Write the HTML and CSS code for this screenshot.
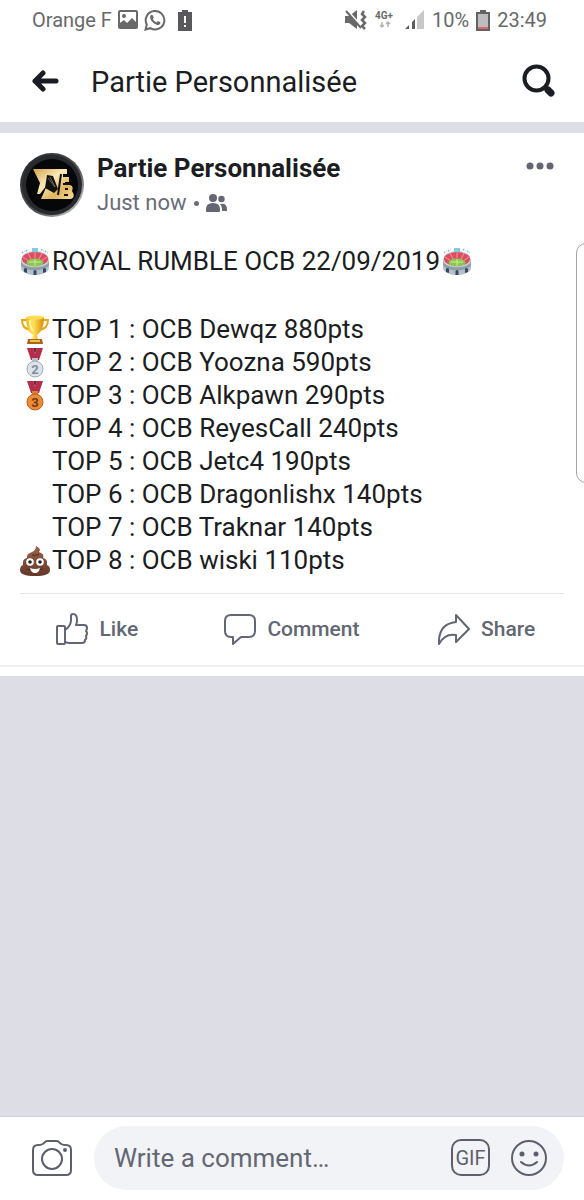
FILE: index.html
```html
<!DOCTYPE html>
<html lang="fr">
<head>
<meta charset="utf-8">
<meta name="viewport" content="width=device-width, initial-scale=1">
<title>Partie Personnalisée</title>
<link rel="stylesheet" href="styles.css">
</head>
<body>
<svg class="defs" aria-hidden="true">
  <defs>
    <linearGradient id="gold" x1="0" y1="0" x2="1" y2="0"><stop offset="0" stop-color="#f3b414"/><stop offset=".4" stop-color="#ffe45a"/><stop offset="1" stop-color="#d78a08"/></linearGradient>
    <linearGradient id="foil" x1="0" y1="0" x2="1" y2="1"><stop offset="0" stop-color="#d3a04b"/><stop offset=".4" stop-color="#fbeab9"/><stop offset=".7" stop-color="#e0b45d"/><stop offset="1" stop-color="#f4dc9b"/></linearGradient>
    <linearGradient id="rim" x1="0" y1="0" x2="1" y2="1"><stop offset="0" stop-color="#222326"/><stop offset=".6" stop-color="#54565a"/><stop offset="1" stop-color="#e4e4e6"/></linearGradient>
    <linearGradient id="brown" x1="0" y1="0" x2="0" y2="1"><stop offset="0" stop-color="#9a6449"/><stop offset="1" stop-color="#65372a"/></linearGradient>
    <symbol id="stadium" viewBox="0 0 30 30">
      <path d="M2 6l3-2M6 4l3-1.500M21 2.500l3 1.500M25 4l3 2" stroke="#72b8cf" stroke-width="1.400" stroke-dasharray="1.500 1.500"/>
      <path d="M1 12v10c2 4 8 6 14 6s12-2 14-6V12z" fill="#b4c0c6"/>
      <path d="M1 15c3 7 25 7 28 0v3c-3 7-25 7-28 0z" fill="#8f9da8"/>
      <ellipse cx="15" cy="12" rx="14" ry="8" fill="#cfd6da"/>
      <ellipse cx="15" cy="12" rx="13" ry="7" fill="#dc4d5f"/>
      <path d="M8 6l3 6M15 5v6M22 6l-3 6M3 10l6 4M27 10l-6 4" stroke="#f39aa3"/>
      <ellipse cx="15" cy="15.500" rx="8.500" ry="4" fill="#8cc653"/>
      <path d="M9 15h12M15 12v7" stroke="#d0e99b"/>
      <path d="M12 1h6v4h-6z" fill="#83cbdc"/>
      <path d="M4 25v-3q1.500-2 3 0v4zM13.500 28v-4q1.500-2 3 0v4zM23 26v-4q1.500-2 3 0v3z" fill="#344963"/>
    </symbol>
    <symbol id="people" viewBox="0 0 22 20">
      <circle cx="7" cy="5" r="4"/><path d="M0 18v-2q0-6 7-6t7 6v2q0 1-1 1H1q-1 0-1-1z"/>
      <circle cx="15.500" cy="6" r="3.200"/><path d="M14 11q7-1 7 5v2h-5v-2q0-3-2-5z"/>
    </symbol>
  </defs>
</svg>

<div class="screen">
  <div class="status">
    <div class="status-group">
      <span>Orange F</span>
      <svg class="status-icon" viewBox="0 0 20 20" fill="none"><rect x="1" y="1" width="18" height="17" rx="1" stroke="#69696b" stroke-width="2"/><circle cx="6" cy="6" r="2" fill="#69696b"/><path d="M2 17v-4l4-3 3 3 5-5 5 5v4z" fill="#69696b"/></svg>
      <svg class="status-icon status-chat" viewBox="0 0 22 22" fill="none"><path d="M1.500 20.500l1.300-5A9.300 9.300 0 1 1 6.300 19.200z" stroke="#69696b" stroke-width="2"/><path d="M6.200 7.200q1-2.300 2.500-1l1 2.400-1 1.400q1.300 2.400 3.700 3.500l1.500-1.500 2.500 1.300q.5 1.700-1.700 2.600-2.200.5-5.200-2-3.800-3.200-3.300-6.700z" fill="#69696b"/></svg>
      <svg class="status-battery" viewBox="0 0 14 21"><path d="M0 2h4V0h6v2h4v19H0z" fill="#59595b"/><path d="M6 6h2v7H6zM6 15h2v2H6z" fill="#fff"/></svg>
    </div>
    <div class="status-group status-right">
      <svg class="mute" viewBox="0 0 22 20" fill="none"><path d="M0 6h4l8-6v19l-8-6H0z" fill="#69696b"/><path d="M2 0l15 17" stroke="#fff" stroke-width="2"/><path d="M1 1l15 17" stroke="#69696b" stroke-width="2"/><path d="M19 1l-2 3 3 3-3 3 3 3-3 3 3 3" stroke="#69696b" stroke-width="2.500"/></svg>
      <svg class="network" viewBox="0 0 24 22"><text x="1" y="10" class="network-text">4G+</text><path d="M8 13v5M6 16l2 2 2-2M14 18v-5M12 15l2-2 2 2" fill="none" stroke="#b2b2b4" stroke-width="1.500"/></svg>
      <svg class="signal" viewBox="0 0 20 20"><path d="M0 19l4-4v4zM7 12l3-3v10H7z" fill="#5e5e60"/><path d="M12 7l7-7v19h-7z" fill="#c8c8ca"/></svg>
      <span>10%</span>
      <svg class="status-battery" viewBox="0 0 14 21"><path d="M0 2h4V0h6v2h4v19H0z" fill="#626264"/><path d="M2 4h10v13H2z" fill="#bdbdbf"/><path d="M2 17h10v2H2z" fill="#e26464"/></svg>
      <time class="clock">23:49</time>
    </div>
  </div>

  <header class="topbar">
    <button class="icon-button" type="button" aria-label="Back"><svg width="28" height="24" viewBox="0 0 28 24" fill="none" stroke="#1b1d22" stroke-width="5" stroke-linecap="round" stroke-linejoin="round"><path d="M11 4l-8 8 8 8M3 12h21"/></svg></button>
    <h1 class="title">Partie Personnalisée</h1>
    <button class="icon-button" type="button" aria-label="Search"><svg width="34" height="34" viewBox="0 0 34 34" fill="none" stroke="#1b1d22"><circle cx="14.500" cy="14.500" r="12" stroke-width="4"/><path d="M23 23l2 2" stroke-width="4"/><path d="M26 26l3 3" stroke-width="7" stroke-linecap="round"/></svg></button>
  </header>

  <main class="feed">
    <article class="post">
      <div class="post-head">
        <svg class="avatar" viewBox="0 0 64 64" role="img" aria-label="OCB">
          <circle cx="32" cy="32" r="32" fill="url(#rim)"/><circle cx="32" cy="32" r="30" fill="#292a2d"/><circle cx="32" cy="32" r="26" fill="#060708"/>
          <path d="M13 16h34v5h-4v3h6v5h-4v3h5q4 1 2 6 4 6-1 8H21l4-9 2-5-7 9h-3l3-11z" fill="url(#foil)"/>
          <path d="M27 22l6 1 5 13-4 4-9-5z" fill="#12120f"/><path d="M28 25l7 9M30 24l5 10" stroke="#6b6859"/>
          <path d="M41 21l-3 21M43 31h7" stroke="#12120f" stroke-width="2" fill="none"/>
          <path d="M45 35h3v2h-3zM44 41h4v2h-4z" fill="#12120f"/>
        </svg>
        <div class="byline">
          <h2 class="author">Partie Personnalisée</h2>
          <p class="meta">Just now <span class="dot"></span><svg width="22" height="20" fill="#626773"><use href="#people"/></svg></p>
        </div>
        <button class="icon-button more" type="button" aria-label="More options"><svg width="28" height="8" viewBox="0 0 28 8" fill="#626572"><circle cx="4" cy="4" r="3.500"/><circle cx="14" cy="4" r="3.500"/><circle cx="24" cy="4" r="3.500"/></svg></button>
      </div>

      <p class="headline"><svg class="emoji"><use href="#stadium"/></svg><span>ROYAL RUMBLE OCB 22/09/2019</span><svg class="emoji"><use href="#stadium"/></svg></p>
      <ul class="ranking">
        <li><svg class="emoji" viewBox="0 0 30 30"><path d="M7 5H2q0 9 9 10M23 5h5q0 9-9 10" fill="none" stroke="#e9a817" stroke-width="2"/><path d="M6 2h18q0 14-7 18l1 5h-6l1-5Q6 16 6 2z" fill="url(#gold)"/><ellipse cx="15" cy="2.500" rx="9" ry="2" fill="#ffdc55"/><path d="M10 5q0 8 3 11" fill="none" stroke="#fff3a1" stroke-width="2"/><path d="M8 24h14l1 5H7z" fill="#ae6215"/><path d="M10 25h10v2H10z" fill="#eac153"/></svg><span>TOP 1 : OCB Dewqz 880pts</span></li>
        <li><svg class="emoji" viewBox="0 0 30 30"><path d="M7 0h6l2 6 2-6h6l-4 12h-8z" fill="#b52d4b"/><path d="M13 0l2 6 2-6z" fill="#76203a"/><path d="M12 10h6v4h-6z" fill="#b8c1ca"/><circle cx="15" cy="21" r="8" fill="#dce3e9" stroke="#9eabb8"/><text x="15" y="26" class="medal medal-silver">2</text></svg><span>TOP 2 : OCB Yoozna 590pts</span></li>
        <li><svg class="emoji" viewBox="0 0 30 30"><path d="M7 0h6l2 6 2-6h6l-4 12h-8z" fill="#b52d4b"/><path d="M13 0l2 6 2-6z" fill="#76203a"/><path d="M12 10h6v4h-6z" fill="#d58334"/><circle cx="15" cy="21" r="8" fill="#ee8b36" stroke="#bd601e"/><text x="15" y="26" class="medal medal-bronze">3</text></svg><span>TOP 3 : OCB Alkpawn 290pts</span></li>
        <li><span>TOP 4 : OCB ReyesCall 240pts</span></li>
        <li><span>TOP 5 : OCB Jetc4 190pts</span></li>
        <li><span>TOP 6 : OCB Dragonlishx 140pts</span></li>
        <li><span>TOP 7 : OCB Traknar 140pts</span></li>
        <li><svg class="emoji" viewBox="0 0 30 30"><path d="M16 0q6 3 3 6 6 2 4 6 5 1 4 7 3 1 3 5 0 6-15 6T0 24q0-4 3-5-1-6 4-7-1-4 5-6 4-2 4-6z" fill="url(#brown)"/><path d="M12 9q4 1 7-1M7 23q8 3 16 0" fill="none" stroke="#4d2920"/><circle cx="10" cy="16" r="3.800" fill="#fff"/><circle cx="20" cy="16" r="3.800" fill="#fff"/><circle cx="10" cy="16" r="1.800" fill="#222"/><circle cx="20" cy="16" r="1.800" fill="#222"/><path d="M10 22q5 2 10 0-1 5-5 5t-5-5z" fill="#fff"/></svg><span>TOP 8 : OCB wiski 110pts</span></li>
      </ul>

      <div class="actions">
        <button class="action" type="button"><svg width="32" height="32" viewBox="0 0 32 32" fill="none" stroke="#626773" stroke-width="2" stroke-linejoin="round"><rect x="1" y="13" width="8" height="18" rx="1"/><path d="M9 17q6-4 6-10V3q0-2 2-2 4 0 4 6 0 3-1 5h8q3 0 3 3 0 2-1 3 2 2 0 5 1 3-1 4 0 3-3 3H14q-3 0-5-1"/></svg><span>Like</span></button>
        <button class="action" type="button"><svg width="32" height="32" viewBox="0 0 32 32" fill="none" stroke="#626773" stroke-width="2" stroke-linejoin="round"><path d="M7 2h18q6 0 6 6v10q0 6-6 6h-8l-8 7v-7H7q-6 0-6-6V8q0-6 6-6z"/></svg><span>Comment</span></button>
        <button class="action" type="button"><svg width="32" height="32" viewBox="0 0 32 32" fill="none" stroke="#626773" stroke-width="2" stroke-linejoin="round"><path d="M18 2l13 14-13 13v-7Q7 20 1 31 0 11 18 9z"/></svg><span>Share</span></button>
      </div>
    </article>
  </main>

  <form class="composer">
    <button class="icon-button" type="button" aria-label="Add photo"><svg width="40" height="36" viewBox="0 0 40 36" fill="none" stroke="#5d606c" stroke-width="2"><path d="M6 5q5 0 7-3 1-1 3-1h8q2 0 3 1 2 3 7 3 5 0 5 5v20q0 5-5 5H6q-5 0-5-5V10q0-5 5-5z"/><circle cx="20" cy="19" r="10"/><circle cx="33" cy="10" r="1" fill="#5d606c"/></svg></button>
    <div class="field">
      <input class="comment" type="text" aria-label="Comment" placeholder="Write a comment…">
      <button class="gif" type="button">GIF</button>
      <button class="icon-button" type="button" aria-label="Emoji"><svg width="38" height="38" viewBox="0 0 38 38" fill="none" stroke="#5d606c" stroke-width="2"><circle cx="19" cy="19" r="17"/><path d="M11 23q8 7 16 0" stroke-linecap="round"/><circle cx="12" cy="15" r="1.500" fill="#5d606c"/><circle cx="26" cy="15" r="1.500" fill="#5d606c"/></svg></button>
    </div>
  </form>
  <div class="edge-handle"></div>
</div>
</body>
</html>
```

FILE: styles.css
```css
* { box-sizing: border-box; }
body { margin: 0; background: #dddde5; color: #1b1d22; font-family: Roboto, "Liberation Sans", sans-serif; }
h1, h2, p, ul { margin: 0; padding: 0; }
button { border: 0; padding: 0; background: none; color: inherit; font-family: inherit; cursor: pointer; }
svg { display: block; flex: none; }
.defs { position: absolute; width: 0; height: 0; }
.screen { position: relative; display: flex; flex-direction: column; min-height: 100vh; overflow: hidden; }
.status { display: flex; justify-content: space-between; height: 40px; padding: 0 37px 0 32px; background: #fff; color: #69696b; font-size: 20px; line-height: 40px; }
.status-group { display: flex; align-items: center; gap: 6px; white-space: nowrap; }
.status-icon { width: 20px; height: 20px; }
.status-chat { width: 22px; height: 22px; }
.status-battery { width: 14px; height: 21px; margin-left: 6px; }
.status-right { gap: 7px; }
.status-right .status-battery { margin: 0; }
.mute { width: 22px; height: 20px; }
.network { width: 24px; height: 22px; }
.network-text { font: 700 10px Roboto, sans-serif; fill: #69696b; }
.signal { width: 20px; height: 20px; }
.topbar { display: flex; align-items: center; height: 82px; padding: 0 28px 0 32px; background: #fff; }
.icon-button { display: flex; align-items: center; justify-content: center; flex: none; }
.title { flex: 1; margin-left: 31px; padding-top: 2px; font-size: 29px; font-weight: 400; line-height: 36px; }
.feed { flex: 1; padding-top: 11px; }
.post { background: #fff; padding: 20px 20px 9px; }
.post-head { display: flex; align-items: flex-start; gap: 13px; height: 64px; }
.avatar { width: 64px; height: 64px; }
.byline { flex: 1; }
.author { font-size: 26px; font-weight: 700; line-height: 31px; }
.meta { display: flex; align-items: center; gap: 7px; margin-top: 3px; color: #6a6d77; font-size: 22px; line-height: 32px; }
.dot { width: 5px; height: 5px; border-radius: 50%; background: #6a6d77; }
.more { width: 28px; height: 26px; margin-right: 10px; }
.headline, .ranking { font-size: 26px; line-height: 33px; }
.headline { display: flex; align-items: center; gap: 2px; margin-top: 28px; }
.emoji { width: 30px; height: 30px; }
.ranking { margin-top: 35px; list-style: none; }
.ranking li { display: flex; align-items: center; gap: 2px; min-height: 33px; }
.ranking span:only-child { margin-left: 32px; }
.medal { font: 700 13px Roboto, sans-serif; text-anchor: middle; }
.medal-silver { fill: #7f8d9b; }
.medal-bronze { fill: #703914; }
.actions { position: relative; display: grid; grid-template-columns: repeat(3, 1fr); margin: 16px -20px 0; border-bottom: 2px solid #efeff2; }
.actions::before { content: ""; position: absolute; top: 0; left: 20px; right: 20px; height: 1px; background: #e7e7eb; }
.action { display: flex; align-items: center; justify-content: center; gap: 11px; height: 72px; color: #626773; font-size: 21px; font-weight: 500; }
.composer { display: flex; align-items: center; gap: 22px; height: 84px; padding: 0 20px 2px 32px; border-top: 1px solid #d1d1d7; background: #fff; }
.field { display: flex; align-items: center; gap: 20px; flex: 1; min-width: 0; height: 64px; padding: 0 16px 0 20px; border-radius: 32px; background: #f2f3f6; }
.comment { flex: 1; min-width: 0; border: 0; padding: 0; background: none; color: #1b1d22; font: 26px Roboto, sans-serif; }
.comment::placeholder { color: #626773; opacity: 1; }
.gif { width: 39px; height: 37px; border: 2px solid #5d606c; border-radius: 10px; color: #5d606c; font-size: 20px; }
.edge-handle { position: absolute; top: 243px; right: -12px; width: 20px; height: 240px; border: 1px solid #a4a4a6; border-radius: 10px; background: #fff; }
```
